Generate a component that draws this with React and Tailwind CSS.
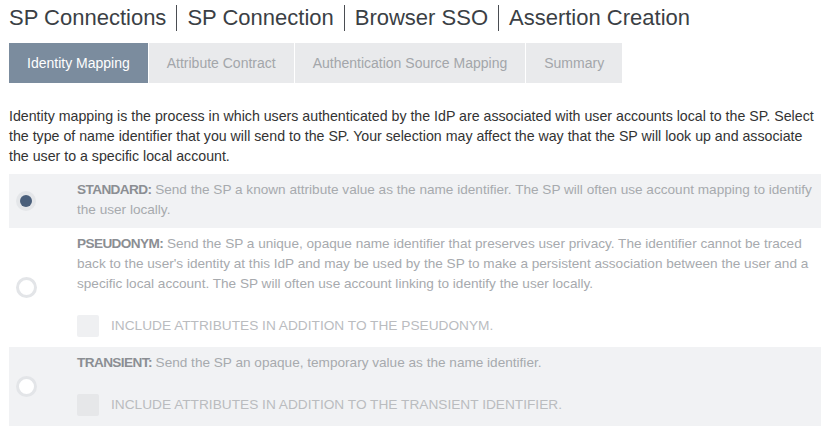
const crumbs = ['SP Connections', 'SP Connection', 'Browser SSO', 'Assertion Creation'];

const tabs = [
  { label: 'Identity Mapping', active: true },
  { label: 'Attribute Contract' },
  { label: 'Authentication Source Mapping' },
  { label: 'Summary' },
];

const Radio = ({ checked }) => {
  if (checked) {
    return (
      <span className="flex h-[20px] w-[20px] items-center justify-center rounded-full bg-[#e4e6e9]">
        <span className="h-[12px] w-[12px] rounded-full bg-[#4a5f7b]" />
      </span>
    );
  }
  return <span className="block h-[21px] w-[21px] rounded-full border-[3px] border-[#e3e5e8] bg-white" />;
};

const Checkbox = ({ label, shade }) => (
  <div className="flex items-center">
    <span className={`h-[22px] w-[22px] rounded-[2px] ${shade}`} />
    <span className="ml-[12px] text-[13.7px] uppercase text-[#babcbf]">{label}</span>
  </div>
);

const Option = ({ title, text, checked, bg, extra }) => (
  <div className={`flex items-center ${bg}`}>
    <div className="w-[68px] pl-[7px]">
      <Radio checked={checked} />
    </div>
    <div className={`flex-1 pt-[6px] pr-[4px] ${extra ? 'pb-[10px]' : 'pb-[8px]'}`}>
      <p className="text-[13.6px] leading-[20px] text-[#a7aaae]">
        <span className="font-bold tracking-[-0.6px] text-[#8b8e93]">{title}</span> {text}
      </p>
      {extra}
    </div>
  </div>
);

export default function App() {
  return (
    <div className="min-h-screen bg-white pl-[9px] pr-[11px] pt-[4px] font-['Liberation_Sans',Arial,sans-serif]">
      <div className="flex items-center text-[22px] leading-[28px] text-[#3b3f45]">
        {crumbs.map((c, i) => (
          <div key={c} className="flex items-center">
            {i > 0 && <span className="mx-[10px] h-[26px] border-l border-[#4a4d52]" />}
            <span>{c}</span>
          </div>
        ))}
      </div>

      <div className="mt-[11px] flex gap-px">
        {tabs.map((t) => (
          <div
            key={t.label}
            className={`flex h-[40px] items-center px-[18px] text-[14px] ${
              t.active ? 'bg-[#7b8c9e] text-white' : 'bg-[#e9eaec] text-[#a3a6aa]'
            }`}
          >
            {t.label}
          </div>
        ))}
      </div>

      <p className="mt-[23px] text-[14.2px] leading-[20px] text-[#333]">
        Identity mapping is the process in which users authenticated by the IdP are associated with user accounts local
        to the SP. Select the type of name identifier that you will send to the SP. Your selection may affect the way that
        the SP will look up and associate the user to a specific local account.
      </p>

      <div className="mt-[8px]">
        <Option
          checked
          bg="bg-[#f1f2f4]"
          title="STANDARD:"
          text="Send the SP a known attribute value as the name identifier. The SP will often use account mapping to identify the user locally."
        />
        <Option
          bg="bg-white"
          title="PSEUDONYM:"
          text="Send the SP a unique, opaque name identifier that preserves user privacy. The identifier cannot be traced back to the user's identity at this IdP and may be used by the SP to make a persistent association between the user and a specific local account. The SP will often use account linking to identify the user locally."
          extra={
            <div className="mt-[21px]">
              <Checkbox shade="bg-[#eff0f2]" label="Include attributes in addition to the pseudonym." />
            </div>
          }
        />
        <Option
          bg="bg-[#f1f2f4]"
          title="TRANSIENT:"
          text="Send the SP an opaque, temporary value as the name identifier."
          extra={
            <div className="mt-[21px]">
              <Checkbox shade="bg-[#e6e7e9]" label="Include attributes in addition to the transient identifier." />
            </div>
          }
        />
      </div>
    </div>
  );
}
